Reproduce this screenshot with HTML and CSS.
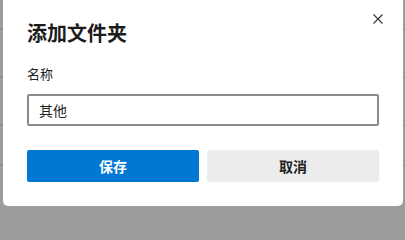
FILE: index.html
```html
<!DOCTYPE html>
<html lang="zh-CN">
<head>
<meta charset="utf-8">
<link rel="stylesheet" href="styles.css">
</head>
<body>
<div class="dialog">
  <button class="close" aria-label="关闭">
    <svg width="10" height="10" viewBox="0 0 10 10"><path d="M0.5 0.5L9.5 9.5M9.5 0.5L0.5 9.5" stroke="#333" stroke-width="1.1" fill="none"/></svg>
  </button>
  <h1 class="title">添加文件夹</h1>
  <label class="label" for="name">名称</label>
  <input class="field" id="name" type="text" value="其他">
  <div class="actions">
    <button class="btn primary">保存</button>
    <button class="btn secondary">取消</button>
  </div>
</div>
</body>
</html>
```
FILE: styles.css
```css
html, body {
  margin: 0;
  padding: 0;
  height: 212px;
  overflow: hidden;
}
body {
  width: 405px;
  background-color: #9c9c9c;
  background-image:
    linear-gradient(to bottom, transparent 28px, #8e8e8e 28px, #8e8e8e 30px, transparent 30px,
      transparent 76px, #8e8e8e 76px, #8e8e8e 78px, transparent 78px,
      transparent 124px, #8e8e8e 124px, #8e8e8e 126px, transparent 126px,
      transparent 164px, #8e8e8e 164px, #8e8e8e 166px, transparent 166px);
  background-repeat: no-repeat;
  background-size: 405px 212px;
  font-family: "Noto Sans CJK SC", "Noto Sans", sans-serif;
  color: #1f1f1f;
}
.dialog {
  position: relative;
  box-sizing: border-box;
  margin-left: 3px;
  width: 400px;
  height: 206px;
  background: #ffffff;
  border-radius: 0 0 5px 5px;
  padding: 19px 24px 24px;
  display: flex;
  flex-direction: column;
}
.close {
  position: absolute;
  top: 9px;
  right: 15px;
  width: 20px;
  height: 20px;
  padding: 0;
  border: 0;
  background: transparent;
  display: flex;
  align-items: center;
  justify-content: center;
}
.title {
  margin: 0;
  font-size: 20px;
  line-height: 28px;
  font-weight: 700;
  color: #1c1c1c;
}
.label {
  margin-top: 18px;
  font-size: 13px;
  line-height: 18px;
  color: #222222;
}
.field {
  margin-top: 11px;
  box-sizing: border-box;
  width: 352px;
  height: 32px;
  border: 2px solid #8a8a8a;
  border-radius: 2px;
  padding: 0 10px;
  font-family: inherit;
  font-size: 14px;
  color: #1f1f1f;
  outline: none;
}
.actions {
  margin-top: 24px;
  display: flex;
  gap: 8px;
}
.btn {
  flex: 1;
  height: 32px;
  border: 0;
  border-radius: 2px;
  font-family: inherit;
  font-size: 14px;
  font-weight: 700;
  padding: 0;
}
.primary {
  background: #0078d4;
  color: #ffffff;
}
.secondary {
  background: #ececec;
  color: #222222;
}
```
